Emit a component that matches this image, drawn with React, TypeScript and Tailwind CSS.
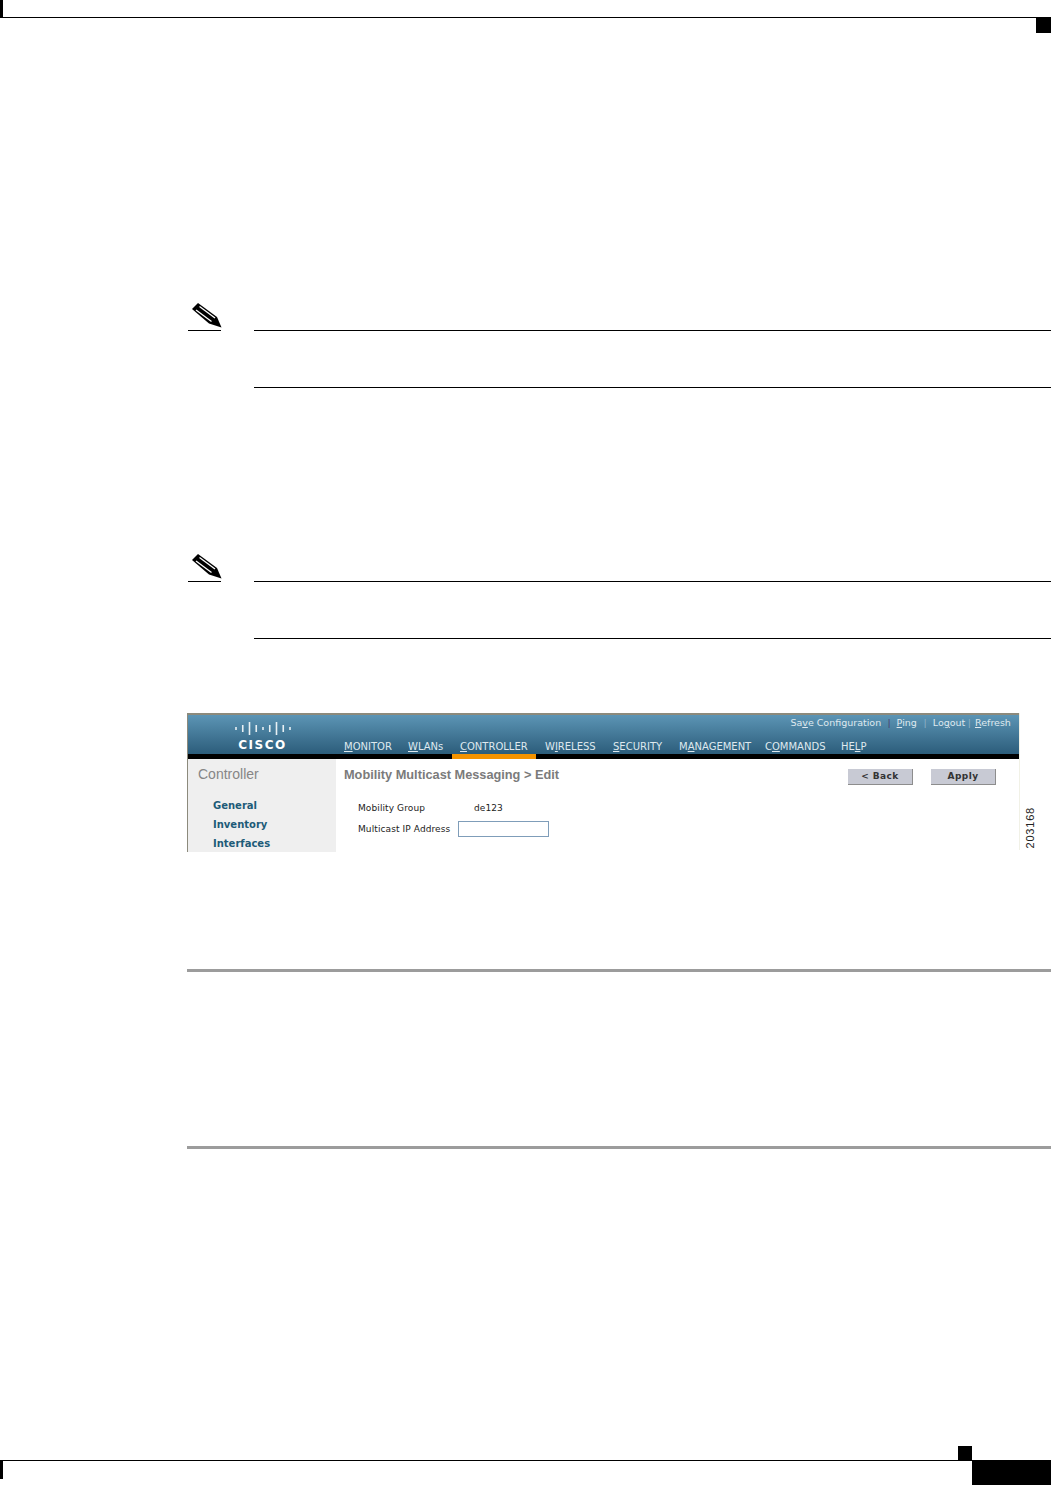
const navItems = [
  { before: "", key: "M", after: "ONITOR", width: "w-[48px]", gap: "mr-[16px]" },
  { before: "", key: "W", after: "LANs", width: "w-[36px]", gap: "mr-[16px]" },
  { before: "", key: "C", after: "ONTROLLER", width: "w-[68px]", gap: "mr-[17px]" },
  { before: "W", key: "I", after: "RELESS", width: "w-[52px]", gap: "mr-[16px]" },
  { before: "", key: "S", after: "ECURITY", width: "w-[51px]", gap: "mr-[15px]" },
  { before: "M", key: "A", after: "NAGEMENT", width: "w-[71px]", gap: "mr-[15px]" },
  { before: "C", key: "O", after: "MMANDS", width: "w-[60px]", gap: "mr-[16px]" },
  { before: "HE", key: "L", after: "P", width: "w-[26px]", gap: "" },
]

const logoBars = [
  { x: 1, h: 3 },
  { x: 7.75, h: 7 },
  { x: 14.5, h: 13 },
  { x: 21.25, h: 7 },
  { x: 28, h: 3 },
  { x: 34.75, h: 7 },
  { x: 41.5, h: 13 },
  { x: 48.25, h: 7 },
  { x: 55, h: 3 },
]

const sideLinks = ["General", "Inventory", "Interfaces"]

const PencilIcon = () => (
  <svg width="34" height="27" viewBox="0 0 34 27" className="block">
    <polygon points="4,6 10,0 29,14 33.5,24.5 21,20.5" fill="#000" />
    <line x1="11.5" y1="3.5" x2="27" y2="15" stroke="#fff" strokeWidth="1.3" />
    <line x1="8" y1="7" x2="23.5" y2="18.5" stroke="#fff" strokeWidth="1.3" />
  </svg>
)

const Note = ({ className }: { className: string }) => (
  <div className={`flex pl-[188px] ${className}`}>
    <div className="h-[28px] w-[33px] border-b border-black">
      <PencilIcon />
    </div>
    <div className="ml-[33px] mt-[27px] h-[58px] flex-1 border-y border-black" />
  </div>
)

const CiscoLogo = () => (
  <div className="flex w-[148px] flex-col items-center pl-[1px] pt-[6px]">
    <svg width="56" height="15" viewBox="0 0 56 15" className="block">
      {logoBars.map((bar) => (
        <rect
          key={bar.x}
          x={bar.x - 0.8}
          y={7.5 - bar.h / 2}
          width="1.6"
          height={bar.h}
          fill="#e8f0f4"
        />
      ))}
    </svg>
    <span className="mt-[3px] text-[12px] leading-[13px] font-bold tracking-[1.5px] text-white [font-family:'DejaVu_Sans',sans-serif]">
      CISCO
    </span>
  </div>
)

const MockScreenshot = () => (
  <div className="ml-[187px] mt-[74px] flex h-[139px] w-[864px]">
    <div className="w-[832px] border-l border-t-2 border-[#8c8a7c]">
      <div className="flex h-[39px] bg-gradient-to-b from-[#5c95b5] to-[#2c5d7b]">
        <CiscoLogo />
        <div className="flex flex-1 flex-col text-[10px] text-[#dfe9ef] [font-family:'DejaVu_Sans',sans-serif]">
          <div className="flex h-[14px] items-end justify-end pr-[8px] text-[9.5px] leading-[12px] whitespace-nowrap">
            <span className="w-[90px]">Sa<u>v</u>e Configuration</span>
            <span className="ml-[7px] mr-[6px] text-[#4a3a70]">|</span>
            <span className="w-[20px]"><u>P</u>ing</span>
            <span className="ml-[7px] mr-[6px] text-[#8fb0c4]">|</span>
            <span className="w-[32px]">Lo<u>g</u>out</span>
            <span className="ml-[3px] mr-[4px] text-[#8fb0c4]">|</span>
            <span className="w-[36px]"><u>R</u>efresh</span>
          </div>
          <div className="ml-[8px] mt-[12px] flex leading-[12px]">
            {navItems.map((item) => (
              <span key={item.after} className={`${item.width} ${item.gap} whitespace-nowrap`}>
                {item.before}
                <u>{item.key}</u>
                {item.after}
              </span>
            ))}
          </div>
        </div>
      </div>
      <div className="flex h-[5px] bg-black">
        <div className="ml-[264px] w-[84px] bg-[#f49300]" />
      </div>
      <div className="flex">
        <div className="h-[93px] w-[148px] bg-[#efefef] pl-[10px] pt-[7px]">
          <div className="text-[14px] leading-[16px] text-[#868686] [font-family:'Liberation_Sans',sans-serif]">
            Controller
          </div>
          <div className="ml-[15px] mt-[17px] flex flex-col gap-[5px] text-[10px] leading-[14px] font-bold text-[#1d5b78] [font-family:'DejaVu_Sans',sans-serif]">
            {sideLinks.map((link) => (
              <span key={link}>{link}</span>
            ))}
          </div>
        </div>
        <div className="flex-1 pl-[8px] pt-[8px]">
          <div className="flex items-start">
            <span className="text-[12.75px] leading-[16px] font-bold text-[#7b7b7b] [font-family:'Liberation_Sans',sans-serif]">
              Mobility Multicast Messaging &gt; Edit
            </span>
            <div className="ml-auto mr-[23px] mt-[2px] flex gap-[18px] text-[9px] font-bold [font-family:'DejaVu_Sans',sans-serif]">
              <button className="h-[16px] w-[65px] border-b border-r border-[#8d8d8d] bg-[#c8cad4] text-[#333] leading-[15px] tracking-[0.4px]">
                &lt; Back
              </button>
              <button className="h-[16px] w-[65px] border-b border-r border-[#8d8d8d] bg-[#c8cad4] text-[#333] leading-[15px] tracking-[0.4px]">
                Apply
              </button>
            </div>
          </div>
          <div className="ml-[14px] mt-[17px] text-[9px] leading-[12px] tracking-[0.1px] text-[#222] [font-family:'DejaVu_Sans',sans-serif]">
            <div className="flex">
              <span className="w-[116px]">Mobility Group</span>
              <span>de123</span>
            </div>
            <div className="mt-[7px] flex items-center">
              <span className="w-[100px] whitespace-nowrap">Multicast IP Address</span>
              <div className="h-[16px] w-[91px] border border-[#7f9db9] bg-white" />
            </div>
          </div>
        </div>
      </div>
    </div>
    <div className="flex h-[137px] w-[32px] items-end border-l border-[#f1f1e6] pl-[4px] pb-[1px]">
      <span className="rotate-180 text-[11px] leading-[12px] tracking-[0.8px] text-[#222] [font-family:'Liberation_Sans',sans-serif] [writing-mode:vertical-rl]">
        203168
      </span>
    </div>
  </div>
)

export default function App() {
  return (
    <div className="flex h-[1485px] w-[1052px] flex-col overflow-hidden bg-white pr-[1px]">
      <div className="h-[18px] border-b border-black">
        <div className="h-[17px] w-[3px] bg-black" />
      </div>
      <div className="ml-auto h-[15px] w-[15px] bg-black" />

      <Note className="mt-[270px]" />
      <Note className="mt-[166px]" />

      <MockScreenshot />

      <div className="ml-[187px] mt-[117px] h-[3px] bg-[#9c9c9c]" />
      <div className="ml-[187px] mt-[174px] h-[3px] bg-[#9c9c9c]" />

      <div className="mt-auto flex h-[39px]">
        <div className="flex flex-1 flex-col">
          <div className="flex h-[15px] justify-end border-b border-black">
            <div className="h-[14px] w-[14px] bg-black" />
          </div>
          <div className="h-[18px] w-[3px] bg-black" />
        </div>
        <div className="mt-[14px] h-[25px] w-[79px] bg-black" />
      </div>
    </div>
  )
}
